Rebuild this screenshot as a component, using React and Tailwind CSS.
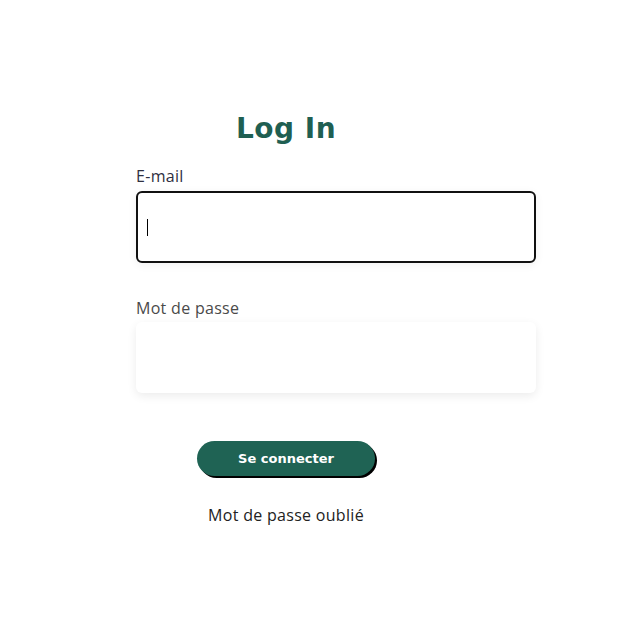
export default function App() {
  return (
    <div className="w-[617px] h-[624px] bg-white" style={{ fontFamily: '"Open Sans", "Liberation Sans", sans-serif' }}>
      <div className="pt-[112px] pl-[136px] flex flex-col">
        <div className="w-[300px] flex justify-center">
          <h1 className="text-[28px] leading-[34px] font-bold text-[#1f5f52] tracking-[0.5px]" style={{ fontFamily: '"DejaVu Sans", sans-serif' }}>Log In</h1>
        </div>
        <label className="mt-[21px] text-[16px] leading-[18px] tracking-[0.3px] text-[#2f2f3f]">E-mail</label>
        <div className="mt-[6px] w-[400px] h-[72px] rounded-[6px] border-2 border-[#111] bg-white flex items-center pl-[9px] shadow-[0_2px_10px_rgba(0,0,0,0.06)]">
          <div className="w-px h-[17px] bg-black" />
        </div>
        <label className="mt-[36px] text-[16px] leading-[18px] tracking-[0.3px] text-[#4a4a4a]">Mot de passe</label>
        <div className="mt-[5px] w-[400px] h-[71px] rounded-[6px] bg-white shadow-[0_3px_10px_rgba(0,0,0,0.08)]" />
        <div className="w-[300px] flex justify-center mt-[48px]">
          <button className="w-[178px] h-[35px] rounded-full bg-[#1f6354] text-white text-[13px] font-bold shadow-[2px_2px_0_#000]" style={{ fontFamily: '"DejaVu Sans", sans-serif' }}>Se connecter</button>
        </div>
        <div className="w-[300px] flex justify-center mt-[30px]">
          <span className="text-[16px] leading-[18px] tracking-[0.3px] text-[#222]">Mot de passe oublié</span>
        </div>
      </div>
    </div>
  );
}
